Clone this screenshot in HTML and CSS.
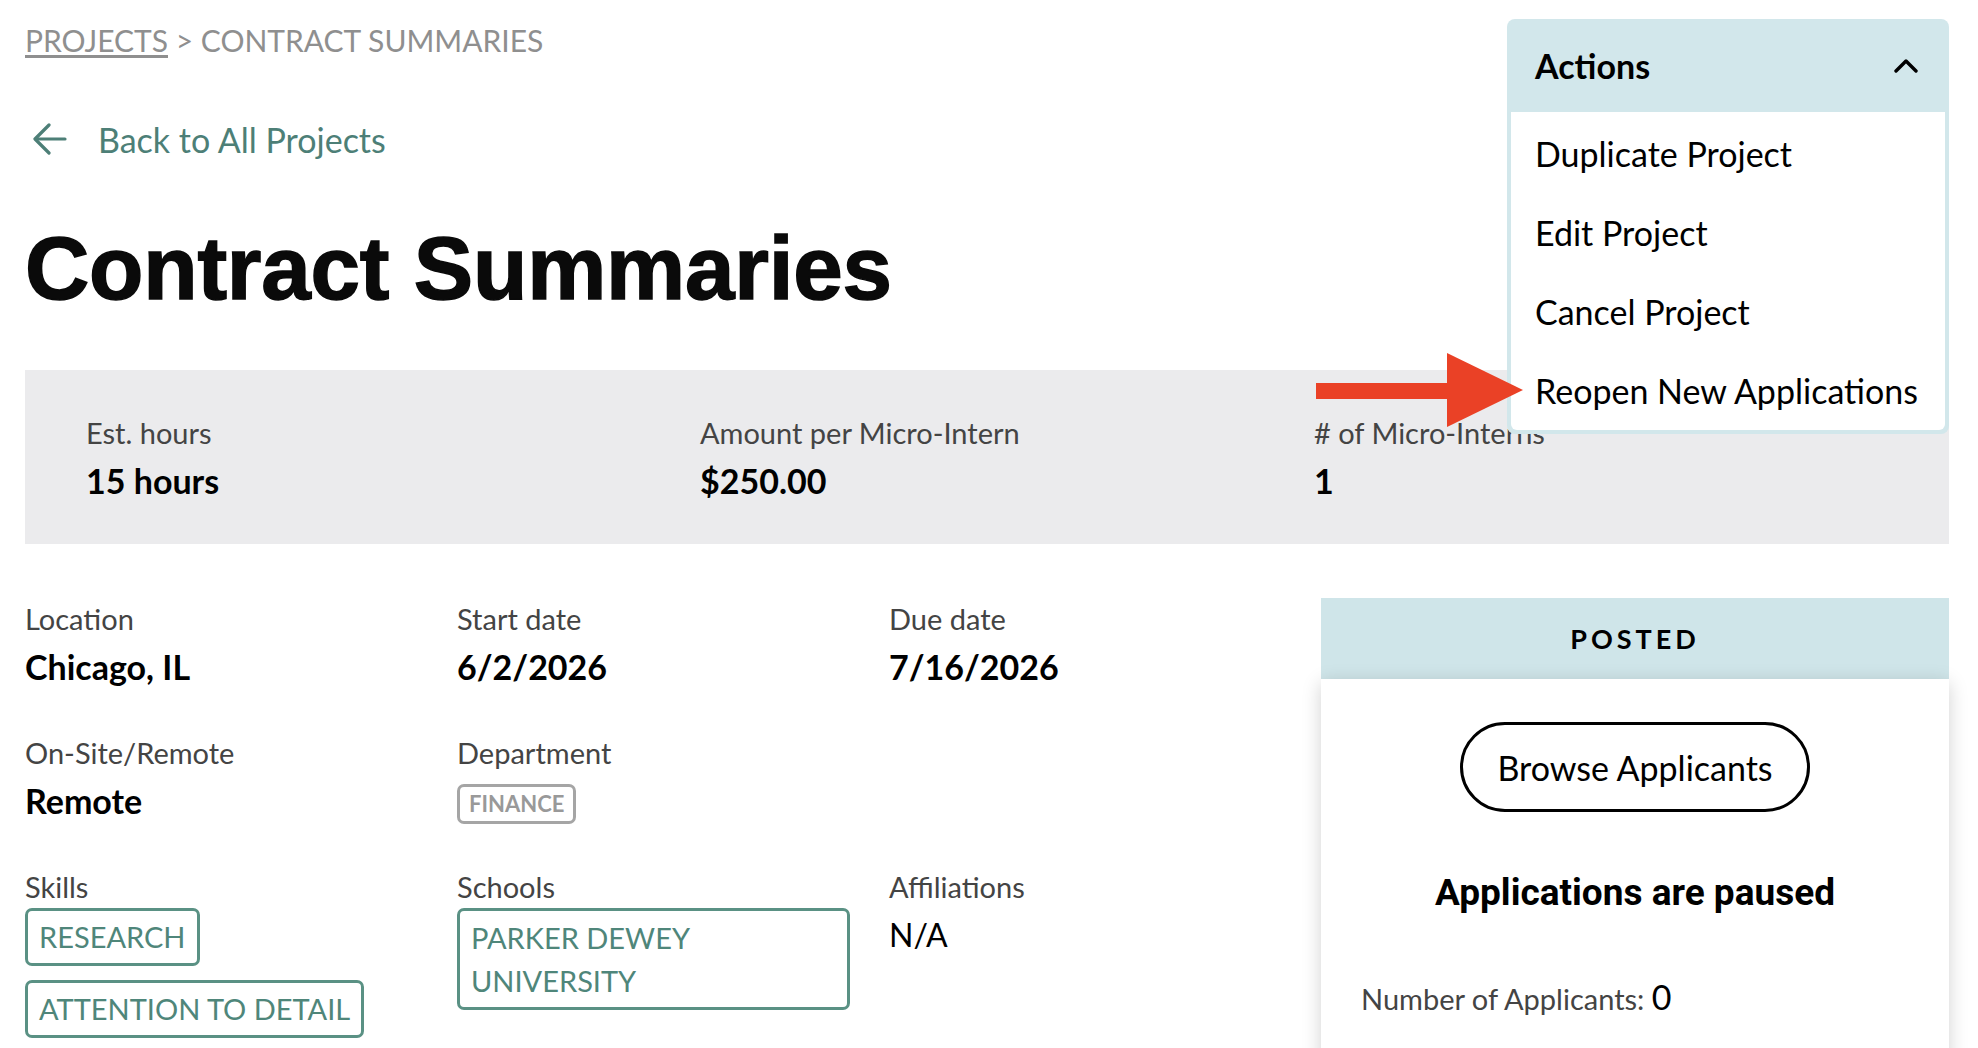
FILE: index.html
```html
<!DOCTYPE html>
<html lang="en">
<head>
  <meta charset="UTF-8">
  <meta name="viewport" content="width=device-width, initial-scale=1.0">
  <title>Contract Summaries - Projects</title>
  <link rel="stylesheet" href="styles.css">
</head>
<body>
  <div class="page">
    <div class="breadcrumb">
      <a href="#">PROJECTS</a> &gt; CONTRACT SUMMARIES
    </div>

    <a class="back-link" href="#">
      <svg width="34" height="32" viewBox="0 0 34 32" fill="none" stroke="#4d7f77" stroke-width="3.2" stroke-linecap="round" stroke-linejoin="round">
        <path d="M32 16H3"/>
        <path d="M16 2L2 16l14 14"/>
      </svg>
      <span>Back to All Projects</span>
    </a>

    <h1 class="page-title">Contract Summaries</h1>

    <div class="stats">
      <div class="stat">
        <div class="stat-label">Est. hours</div>
        <div class="stat-value">15 hours</div>
      </div>
      <div class="stat">
        <div class="stat-label">Amount per Micro-Intern</div>
        <div class="stat-value">$250.00</div>
      </div>
      <div class="stat">
        <div class="stat-label"># of Micro-Interns</div>
        <div class="stat-value">1</div>
      </div>
    </div>

    <div class="main">
      <div class="details">
        <div class="field">
          <div class="field-label">Location</div>
          <div class="field-value">Chicago, IL</div>
        </div>
        <div class="field">
          <div class="field-label">Start date</div>
          <div class="field-value">6/2/2026</div>
        </div>
        <div class="field">
          <div class="field-label">Due date</div>
          <div class="field-value">7/16/2026</div>
        </div>

        <div class="field">
          <div class="field-label">On-Site/Remote</div>
          <div class="field-value">Remote</div>
        </div>
        <div class="field">
          <div class="field-label">Department</div>
          <div class="tags tags-dept"><span class="tag tag-gray">FINANCE</span></div>
        </div>
        <div class="field"></div>

        <div class="field">
          <div class="field-label">Skills</div>
          <div class="tags">
            <span class="tag">RESEARCH</span>
            <span class="tag">ATTENTION TO DETAIL</span>
          </div>
        </div>
        <div class="field">
          <div class="field-label">Schools</div>
          <div class="tags">
            <span class="tag tag-wide">PARKER DEWEY UNIVERSITY</span>
          </div>
        </div>
        <div class="field">
          <div class="field-label">Affiliations</div>
          <div class="field-plain">N/A</div>
        </div>
      </div>

      <div class="status-card">
        <div class="status-head">POSTED</div>
        <div class="status-body">
          <button class="browse-button">Browse Applicants</button>
          <p class="paused">Applications are paused</p>
          <p class="applicants">Number of Applicants: <span>0</span></p>
        </div>
      </div>
    </div>

    <div class="actions-menu">
      <div class="actions-head">
        <span>Actions</span>
        <svg width="24" height="14" viewBox="0 0 24 14" fill="none" stroke="#000" stroke-width="3.4" stroke-linecap="round" stroke-linejoin="round">
          <path d="M2 12L12 2l10 10"/>
        </svg>
      </div>
      <ul class="actions-list">
        <li>Duplicate Project</li>
        <li>Edit Project</li>
        <li>Cancel Project</li>
        <li>Reopen New Applications</li>
      </ul>
    </div>

    <svg class="pointer-arrow" width="210" height="76" viewBox="0 0 210 76">
      <rect x="0" y="30" width="134" height="16" fill="#ea4126"/>
      <polygon points="131,0 207,37 131,74" fill="#ea4126"/>
    </svg>
  </div>
</body>
</html>
```

FILE: styles.css
```css
body {
  margin: 0;
  font-family: 'Lato', 'Open Sans', sans-serif;
  color: #000;
  background-color: #fff;
}
.page {
  position: relative;
  padding: 22px 29px 0 25px;
  height: 1048px;
  overflow: hidden;
  box-sizing: border-box;
}
.breadcrumb {
  font-size: 30px;
  line-height: 36px;
  color: #8f8f8f;
}
.breadcrumb a {
  color: #8f8f8f;
  text-decoration: underline;
  text-underline-offset: 3px;
}
.back-link {
  display: flex;
  align-items: center;
  gap: 31px;
  margin-top: 61px;
  height: 40px;
  padding-left: 8px;
  color: #4d7f77;
  text-decoration: none;
  font-size: 34px;
}
.page-title {
  margin: 65px 0 0;
  font-family: 'Liberation Sans', Arial, sans-serif;
  font-weight: 700;
  font-size: 89px;
  line-height: 88px;
  letter-spacing: -0.2px;
  color: #0a0a0a;
  -webkit-text-stroke: 1.5px #0a0a0a;
}
.stats {
  margin-top: 58px;
  height: 174px;
  box-sizing: border-box;
  padding: 44px 21px 0 61px;
  background-color: #ebebed;
  display: grid;
  grid-template-columns: repeat(3, 1fr);
}
.stat-label {
  font-size: 29px;
  line-height: 38px;
  color: #444;
}
.stat-value {
  font-size: 34px;
  line-height: 58px;
  font-weight: 700;
}
.main {
  display: flex;
  margin-top: 58px;
}
.details {
  width: 1296px;
  display: grid;
  grid-template-columns: repeat(3, 432px);
  row-gap: 38px;
  align-content: start;
}
.field-label {
  font-size: 29px;
  line-height: 34px;
  color: #444;
}
.field-value {
  font-size: 34px;
  line-height: 62px;
  font-weight: 700;
}
.field-plain {
  font-size: 32px;
  line-height: 62px;
}
.tags {
  display: flex;
  flex-direction: column;
  align-items: flex-start;
  gap: 14px;
  margin-top: 4px;
}
.tags-dept {
  margin-top: 14px;
}
.tag {
  border: 3px solid #5a9184;
  border-radius: 7px;
  padding: 0 11px;
  font-size: 29px;
  line-height: 52px;
  color: #4f867a;
}
.tag-wide {
  width: 365px;
  line-height: 43px;
  padding: 5px 11px;
}
.tag-gray {
  border-color: #a5a5a5;
  color: #999;
  font-size: 22px;
  line-height: 34px;
  font-weight: 700;
  padding: 0 9px;
}
.status-card {
  flex: 1;
  margin-top: -4px;
}
.status-head {
  background-color: #cfe5e9;
  height: 81px;
  line-height: 81px;
  text-align: center;
  font-size: 27px;
  font-weight: 700;
  letter-spacing: 4px;
}
.status-body {
  background-color: #fff;
  box-shadow: 0 4px 18px rgba(0,0,0,0.18);
  padding: 43px 40px 60px;
  text-align: center;
  height: 600px;
}
.browse-button {
  background: #fff;
  border: 3px solid #000;
  border-radius: 45px;
  width: 350px;
  height: 90px;
  font-family: 'Lato', sans-serif;
  font-size: 34px;
  color: #000;
  cursor: pointer;
}
.paused {
  margin: 61px 0 0;
  font-family: 'Roboto', 'Liberation Sans', sans-serif;
  font-weight: 700;
  font-size: 37px;
  line-height: 40px;
}
.applicants {
  margin: 64px 0 0;
  text-align: left;
  font-size: 29px;
  line-height: 40px;
  color: #444;
}
.applicants span {
  font-size: 34px;
  color: #000;
}
.actions-menu {
  position: absolute;
  top: 19px;
  left: 1507px;
  width: 442px;
  border-radius: 8px;
  background-color: #d2e7eb;
  padding: 0 4px 4px;
  box-sizing: border-box;
}
.actions-head {
  height: 93px;
  display: flex;
  align-items: center;
  justify-content: space-between;
  padding: 0 27px 0 24px;
  font-size: 34px;
  font-weight: 700;
}
.actions-list {
  list-style: none;
  margin: 0;
  padding: 2px 0 0;
  background-color: #fff;
  border-radius: 0 0 6px 6px;
}
.actions-list li {
  padding-left: 24px;
  font-size: 34px;
  line-height: 79px;
}
.pointer-arrow {
  position: absolute;
  left: 1316px;
  top: 353px;
}
```
